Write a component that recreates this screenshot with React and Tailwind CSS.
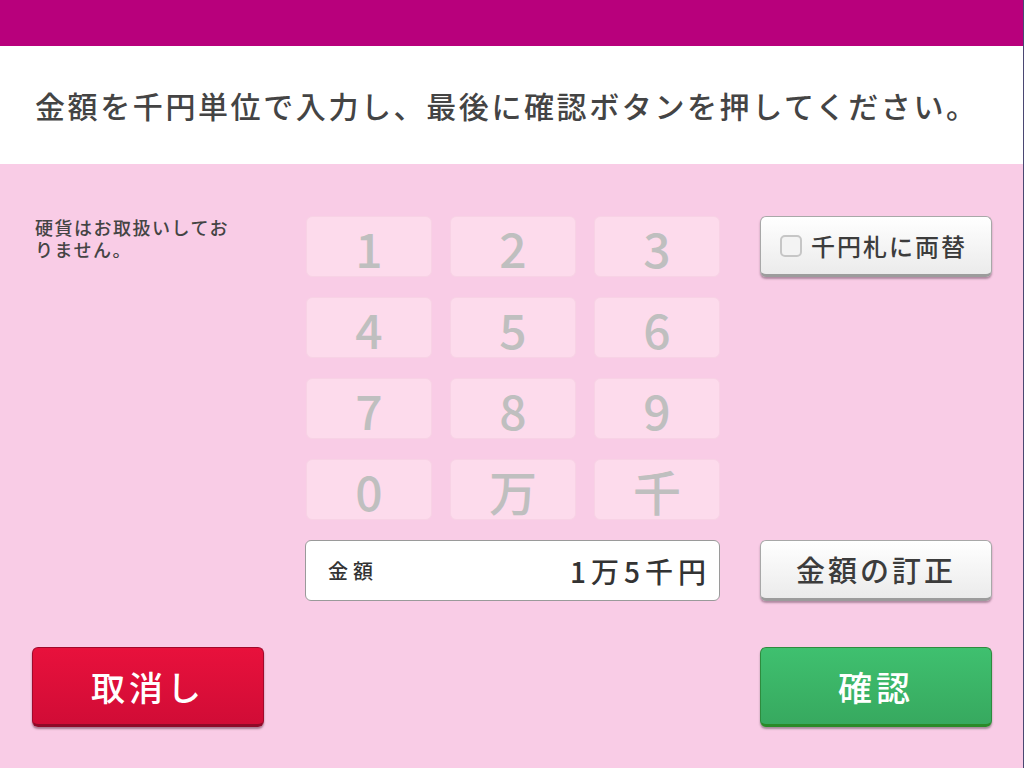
import React from "react";

const keys = ["1", "2", "3", "4", "5", "6", "7", "8", "9", "0", "万", "千"];

function WhiteButton({ children, className = "" }) {
  return (
    <div
      className={
        "flex h-[61px] w-[232px] items-center justify-center rounded-[6px] border border-[#a8a8a8] border-b-[3px] border-b-[#9c9c9c] bg-linear-to-b from-[#ffffff] to-[#ebebeb] text-[#3c3c3c] shadow-[0_2px_2px_rgba(90,60,80,0.45)] " +
        className
      }
    >
      {children}
    </div>
  );
}

export default function App() {
  return (
    <div className="flex h-[768px] w-[1024px] flex-col border-r border-r-[#4a4872] font-['Noto_Sans_CJK_JP','Noto_Sans',sans-serif]">
      <div className="h-[46px] bg-[#b8007c]" />
      <div className="flex h-[118px] items-center bg-white pl-[35px]">
        <p className="text-[30px] font-medium leading-none tracking-[2.6px] text-[#444444]">
          金額を千円単位で入力し、最後に確認ボタンを押してください。
        </p>
      </div>
      <div className="flex flex-1 flex-col bg-[#f9cce6] pl-[32px] pr-[31px] pt-[52px]">
        <div className="flex">
          <div className="flex w-[273px] flex-col pl-[3px] text-[18px] font-medium leading-[22px] tracking-[1.5px] text-[#444444]">
            <span>硬貨はお取扱いしてお</span>
            <span>りません。</span>
          </div>
          <div className="flex w-[415px] flex-col gap-[20px]">
            <div className="grid grid-cols-[126px_126px_126px] gap-x-[18px] gap-y-[20px] pl-[1px]">
              {keys.map((k) => (
                <div
                  key={k}
                  className="flex h-[61px] items-center justify-center rounded-[6px] border border-[#f8d2e5] bg-[#fddbec] text-[48px] font-medium leading-none text-[#bfbfbf]"
                >
                  {k}
                </div>
              ))}
            </div>
            <div className="flex h-[61px] items-center justify-between rounded-[6px] border border-[#9a9a9a] bg-white pl-[22px] pr-[8px]">
              <span className="text-[20px] font-medium tracking-[5px] text-[#333333]">金額</span>
              <span className="text-[28px] font-medium tracking-[5px] text-[#333333]">1万5千円</span>
            </div>
          </div>
          <div className="ml-[40px] flex w-[232px] flex-col justify-between">
            <WhiteButton className="justify-start pl-[19px]">
              <span className="mr-[9px] h-[22px] w-[22px] rounded-[5px] border-2 border-[#c6c6c6] bg-[#f3f3f3]" />
              <span className="text-[24px] font-medium tracking-[2px]">千円札に両替</span>
            </WhiteButton>
            <WhiteButton>
              <span className="text-[29px] font-medium tracking-[3px]">金額の訂正</span>
            </WhiteButton>
          </div>
        </div>
        <div className="mt-[46px] flex justify-between">
          <div className="flex h-[80px] w-[232px] items-center justify-center rounded-[6px] border border-[#a00a2c] border-b-[3px] border-b-[#8e0a28] bg-linear-to-b from-[#e8113c] to-[#d10c36] shadow-[0_2px_2px_rgba(90,40,60,0.5)]">
            <span className="text-[34px] font-medium tracking-[4px] text-white">取消し</span>
          </div>
          <div className="flex h-[80px] w-[232px] items-center justify-center rounded-[6px] border border-[#2e8b3e] border-b-[3px] border-b-[#2a8a28] bg-linear-to-b from-[#3fc06f] to-[#37a95f] shadow-[0_2px_2px_rgba(60,60,60,0.45)]">
            <span className="text-[34px] font-medium tracking-[4px] text-white">確認</span>
          </div>
        </div>
      </div>
    </div>
  );
}
